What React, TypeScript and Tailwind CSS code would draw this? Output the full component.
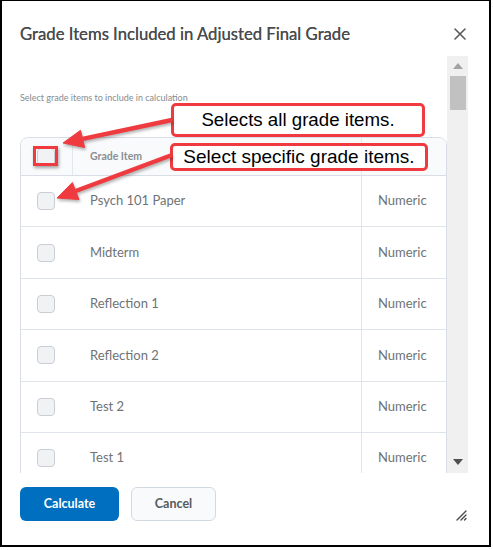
import React from "react";

const rows = ["Psych 101 Paper", "Midterm", "Reflection 1", "Reflection 2", "Test 2", "Test 1"];

function Checkbox() {
  return <div className="w-[18px] h-[18px] rounded-[4px] border border-[#c9ced6] bg-[#f1f2f4]" />;
}

export default function App() {
  const red = "#ef3b3f";
  return (
    <div className="relative w-[493px] h-[550px] bg-white" style={{ fontFamily: "Lato, 'Noto Sans', sans-serif" }}>
      <div className="w-[491px] h-[547px] border-2 border-t border-black flex flex-col">
        {/* header */}
        <div className="h-[55px] flex items-start justify-between pl-[18px] pr-[22px] pt-[22px]">
          <div className="text-[16.7px] leading-[22px] text-[#494c4e] [text-shadow:0_0_0.4px_#494c4e]">Grade Items Included in Adjusted Final Grade</div>
          <svg width="14" height="14" viewBox="0 0 14 14" className="mt-[4px]">
            <path d="M2 2 L12 12 M12 2 L2 12" stroke="#565a5c" strokeWidth="1.6" strokeLinecap="round" />
          </svg>
        </div>
        {/* body */}
        <div className="h-[417px] flex pl-[18px] pr-[21px]">
          <div className="flex-1 overflow-hidden pt-[36px]">
            <div className="text-[9px] leading-[12px] text-[#868b8f]">Select grade items to include in calculation</div>
            <div className="mt-[33px] border border-[#d9dee6] rounded-t-[8px] overflow-hidden">
              <div className="h-[38px] bg-[#f9fafb] flex border-b border-[#d9dee6]">
                <div className="w-[52px] border-r border-[#e3e7ee] flex items-center pl-[16px]">
                  <Checkbox />
                </div>
                <div className="flex-1 flex items-center pl-[17px] text-[10.5px] font-bold text-[#8a8f94] border-r border-[#e3e7ee]">Grade Item</div>
                <div className="w-[84px]" />
              </div>
              {rows.map((r) => (
                <div key={r} className="h-[51.4px] flex border-b border-[#dfe3ea]">
                  <div className="w-[52px] flex items-center pl-[16px]">
                    <Checkbox />
                  </div>
                  <div className="flex-1 flex items-center pl-[17px] text-[13px] text-[#6e7376] border-r border-[#dfe3ea]">{r}</div>
                  <div className="w-[84px] flex items-center pl-[16px] text-[13px] text-[#6e7376]">Numeric</div>
                </div>
              ))}
            </div>
          </div>
          {/* scrollbar */}
          <div className="w-[21px] bg-[#f0f0f0] flex flex-col items-center">
            <svg width="10" height="6" viewBox="0 0 10 6" className="mt-[7px]">
              <path d="M0 6 L5 0 L10 6 Z" fill="#a3a3a3" />
            </svg>
            <div className="mt-[7px] w-[16px] h-[34px] bg-[#c1c1c1]" />
            <div className="flex-1" />
            <svg width="10" height="6" viewBox="0 0 10 6" className="mb-[8px]">
              <path d="M0 0 L10 0 L5 6 Z" fill="#505050" />
            </svg>
          </div>
        </div>
        {/* footer */}
        <div className="flex pl-[18px] pr-[22px] pt-[14px]">
          <button className="w-[99px] h-[34px] rounded-[6px] bg-[#006fbf] text-white text-[12.5px] font-bold">Calculate</button>
          <button className="ml-[12px] w-[85px] h-[34px] rounded-[6px] bg-[#f9fafb] border border-[#d3d9e3] text-[#565a5c] text-[12.5px] font-bold">Cancel</button>
          <div className="ml-auto mt-[23px]">
            <svg width="11" height="11" viewBox="0 0 11 11">
              <path d="M1 10 L10 1 M5 10 L10 5 M8.5 10 L10 8.5" stroke="#494c4e" strokeWidth="1.4" strokeLinecap="round" />
            </svg>
          </div>
        </div>
      </div>

      {/* annotations */}
      <div
        className="absolute left-[171px] top-[103px] w-[254px] h-[34px] border-[3.5px] border-[#ef3b3f] rounded-[5px] bg-white flex items-center justify-center text-[18.7px] text-black"
        style={{ fontFamily: "'Liberation Sans', Arial, sans-serif" }}
      >
        Selects all grade items.
      </div>
      <div
        className="absolute left-[170px] top-[143px] w-[258px] h-[28px] border-[3.5px] border-[#ef3b3f] rounded-[5px] bg-white flex items-center justify-center text-[19px] text-black"
        style={{ fontFamily: "'Liberation Sans', Arial, sans-serif" }}
      >
        Select specific grade items.
      </div>
      <div className="absolute left-[33px] top-[146px] w-[25px] h-[20px] border-[3px] border-[#ef3b3f] shadow-[1px_2px_3px_rgba(0,0,0,0.35)]" />
      <svg className="absolute left-0 top-0" width="493" height="550" viewBox="0 0 493 550">
        <g fill={red} stroke={red} style={{ filter: "drop-shadow(1px 2px 1.5px rgba(0,0,0,0.3))" }}>
          <line x1="172" y1="120" x2="82.6" y2="138.9" strokeWidth="4.5" />
          <polygon points="63,143 84.6,147.5 80.5,130.3" strokeWidth="1" />
          <line x1="172" y1="155" x2="75.7" y2="191" strokeWidth="4.5" />
          <polygon points="57,198 79,199.5 72.4,182.5" strokeWidth="1" />
        </g>
      </svg>
    </div>
  );
}
